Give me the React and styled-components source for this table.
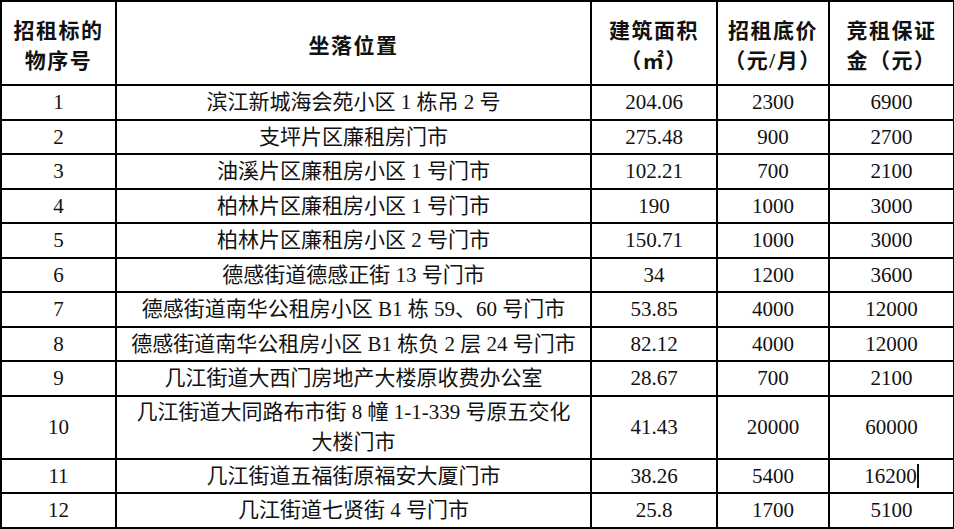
import styled, { createGlobalStyle } from "styled-components";

const GlobalStyle = createGlobalStyle`
  html, body {
    margin: 0;
    padding: 0;
    background: #fff;
  }
  body {
    font-family: "Liberation Serif", "Noto Sans CJK SC", serif;
    color: #111;
  }
`;

const Page = styled.div`
  width: 954px;
  height: 529px;
  overflow: hidden;
  background: #fff;
  display: flex;
  flex-direction: column;
`;

const Sheet = styled.table`
  width: 953px;
  border-collapse: collapse;
  table-layout: fixed;
  border: 2px solid #000;
`;

const HeadCell = styled.th`
  border: 2px solid #000;
  height: 76px;
  padding: 6px 0 0;
  font-size: 21px;
  font-weight: 700;
  letter-spacing: 1.5px;
  line-height: 30px;
  text-align: center;
  vertical-align: middle;
  white-space: nowrap;
`;

const Cell = styled.td`
  border: 2px solid #000;
  height: ${(p) => (p.$tall ? "61px" : "32.5px")};
  padding: 0;
  font-size: 21px;
  line-height: 30px;
  text-align: center;
  vertical-align: middle;
  white-space: nowrap;
`;

const Caret = styled.span`
  display: inline-block;
  width: 2px;
  height: 24px;
  background: #111;
  vertical-align: -5px;
`;

const BlueRule = styled.div`
  height: 2px;
  background: #5676a6;
`;

const rows = [
  ["1", "滨江新城海会苑小区 1 栋吊 2 号", "204.06", "2300", "6900"],
  ["2", "支坪片区廉租房门市", "275.48", "900", "2700"],
  ["3", "油溪片区廉租房小区 1 号门市", "102.21", "700", "2100"],
  ["4", "柏林片区廉租房小区 1 号门市", "190", "1000", "3000"],
  ["5", "柏林片区廉租房小区 2 号门市", "150.71", "1000", "3000"],
  ["6", "德感街道德感正街 13 号门市", "34", "1200", "3600"],
  ["7", "德感街道南华公租房小区 B1 栋 59、60 号门市", "53.85", "4000", "12000"],
  ["8", "德感街道南华公租房小区 B1 栋负 2 层 24 号门市", "82.12", "4000", "12000"],
  ["9", "几江街道大西门房地产大楼原收费办公室", "28.67", "700", "2100"],
  ["10", ["几江街道大同路布市街 8 幢 1-1-339 号原五交化", "大楼门市"], "41.43", "20000", "60000"],
  ["11", "几江街道五福街原福安大厦门市", "38.26", "5400", "16200", true],
  ["12", "几江街道七贤街 4 号门市", "25.8", "1700", "5100"],
];

export default function App() {
  return (
    <>
      <GlobalStyle />
      <Page>
        <Sheet>
          <colgroup>
            <col style={{ width: 115 }} />
            <col style={{ width: 475 }} />
            <col style={{ width: 126 }} />
            <col style={{ width: 112 }} />
            <col style={{ width: 125 }} />
          </colgroup>
          <thead>
            <tr>
              <HeadCell>
                招租标的
                <br />
                物序号
              </HeadCell>
              <HeadCell>坐落位置</HeadCell>
              <HeadCell>
                建筑面积
                <br />
                （㎡）
              </HeadCell>
              <HeadCell>
                招租底价
                <br />
                （元/月）
              </HeadCell>
              <HeadCell>
                竞租保证
                <br />
                金（元）
              </HeadCell>
            </tr>
          </thead>
          <tbody>
            {rows.map(([no, place, area, price, deposit, caret]) => {
              const tall = Array.isArray(place);
              return (
                <tr key={no}>
                  <Cell $tall={tall}>{no}</Cell>
                  <Cell $tall={tall}>
                    {tall ? (
                      <>
                        {place[0]}
                        <br />
                        {place[1]}
                      </>
                    ) : (
                      place
                    )}
                  </Cell>
                  <Cell $tall={tall}>{area}</Cell>
                  <Cell $tall={tall}>{price}</Cell>
                  <Cell $tall={tall}>
                    {deposit}
                    {caret && <Caret />}
                  </Cell>
                </tr>
              );
            })}
          </tbody>
        </Sheet>
        <BlueRule />
      </Page>
    </>
  );
}
